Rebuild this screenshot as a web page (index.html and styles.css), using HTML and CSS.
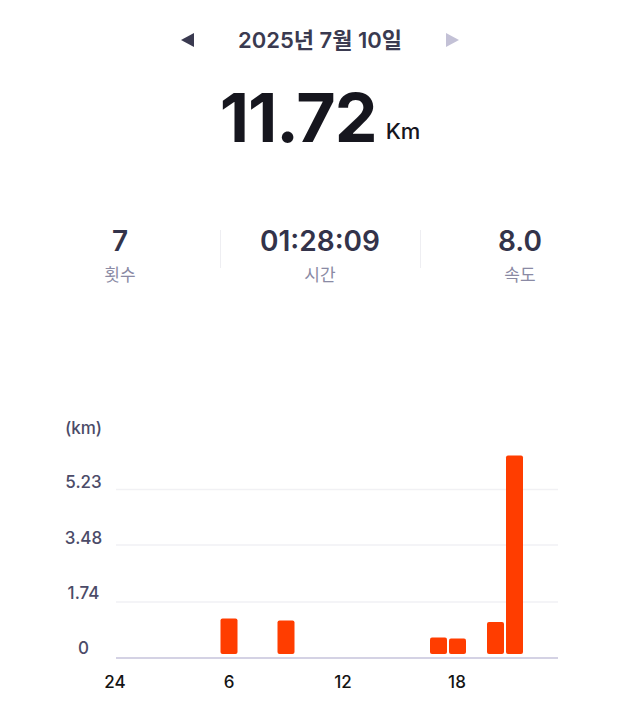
FILE: index.html
```html
<!DOCTYPE html>
<html lang="ko">
<head>
    <meta charset="UTF-8" />
    <meta name="viewport" content="width=device-width, initial-scale=1.0" />
    <title>기록</title>
    <link rel="stylesheet" href="styles.css">
</head>
<body>

<div class="date-nav">
    <span class="arrow arrow-left"></span>
    <span class="date">2025년 7월 10일</span>
    <span class="arrow arrow-right"></span>
</div>

<div class="total">
    <span class="total-value">11.72</span>
    <span class="total-unit">Km</span>
</div>

<div class="stats">
    <div class="stat">
        <div class="stat-value">7</div>
        <div class="stat-label">횟수</div>
    </div>
    <div class="stat">
        <div class="stat-value">01:28:09</div>
        <div class="stat-label">시간</div>
    </div>
    <div class="stat">
        <div class="stat-value">8.0</div>
        <div class="stat-label">속도</div>
    </div>
</div>

<div class="chart">
    <svg width="640" height="290" viewBox="0 0 640 290">
        <g class="y-labels">
            <text x="83.5" y="24">(km)</text>
            <text x="83.5" y="78">5.23</text>
            <text x="83.5" y="134">3.48</text>
            <text x="83.5" y="189">1.74</text>
            <text x="83.5" y="244">0</text>
        </g>
        <g class="grid">
            <line x1="116" y1="79.5" x2="558" y2="79.5" />
            <line x1="116" y1="135" x2="558" y2="135" />
            <line x1="116" y1="192" x2="558" y2="192" />
        </g>
        <line class="axis" x1="116" y1="248" x2="558" y2="248" />
        <g class="bars">
            <rect x="220.5" y="208.5" width="17" height="35.5" rx="2" />
            <rect x="277.5" y="210.5" width="17" height="33.5" rx="2" />
            <rect x="430" y="227.5" width="17" height="16.5" rx="2" />
            <rect x="449" y="228.5" width="17" height="15.5" rx="2" />
            <rect x="487" y="212" width="17" height="32" rx="2" />
            <rect x="506" y="45.5" width="17" height="198.5" rx="2" />
        </g>
        <g class="x-labels">
            <text x="115" y="278">24</text>
            <text x="229" y="278">6</text>
            <text x="343" y="278">12</text>
            <text x="457" y="278">18</text>
        </g>
    </svg>
</div>

</body>
</html>
```

FILE: styles.css
```css
body {
    margin: 0;
    font-family: 'Inter', 'Noto Sans CJK KR', sans-serif;
    background-color: #ffffff;
    width: 640px;
    height: 709px;
    overflow: hidden;
}

.date-nav {
    display: flex;
    justify-content: center;
    align-items: center;
    gap: 44px;
    padding-top: 28px;
    height: 24px;
}

.date {
    font-size: 22px;
    font-weight: 600;
    line-height: 24px;
    color: #3a3a50;
}

.arrow {
    width: 0;
    height: 0;
    border-top: 7px solid transparent;
    border-bottom: 7px solid transparent;
}

.arrow-left {
    border-right: 13px solid #3a3a50;
}

.arrow-right {
    border-left: 13px solid #c3c1d6;
}

.total {
    display: flex;
    justify-content: center;
    align-items: baseline;
    gap: 9px;
    margin-top: 31px;
    color: #16161e;
}

.total-value {
    font-size: 68px;
    font-weight: 700;
    line-height: 68px;
    letter-spacing: -1px;
}

.total-unit {
    font-size: 22px;
    font-weight: 500;
    position: relative;
    top: -3px;
}

.stats {
    display: flex;
    margin: 74px 20px 0;
}

.stat {
    flex: 1;
    display: flex;
    flex-direction: column;
    align-items: center;
    position: relative;
}

.stat + .stat::before {
    content: "";
    position: absolute;
    left: 0;
    top: 5px;
    height: 38px;
    border-left: 1px solid #eeeef2;
}

.stat-value {
    font-size: 28px;
    font-weight: 600;
    line-height: 32px;
    color: #33334a;
}

.stat-label {
    margin-top: 7px;
    font-size: 17px;
    line-height: 22px;
    color: #8a8aa4;
}

.chart {
    position: absolute;
    left: 0;
    top: 410px;
}

.chart svg {
    display: block;
}

.y-labels text {
    font-size: 17px;
    font-weight: 500;
    fill: #4b4b68;
    text-anchor: middle;
}

.x-labels text {
    font-size: 17px;
    font-weight: 500;
    fill: #141414;
    text-anchor: middle;
}

.grid line {
    stroke: #f1f1f4;
    stroke-width: 1.5;
}

.axis {
    stroke: #c6c3db;
    stroke-width: 1.5;
}

.bars rect {
    fill: #ff3d00;
}
```
